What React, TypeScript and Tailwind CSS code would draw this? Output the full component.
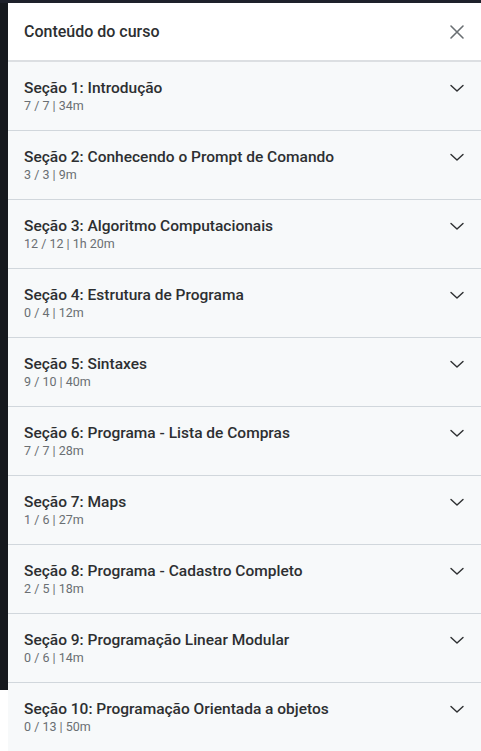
import React from 'react';

const SECTIONS = [
  { title: 'Seção 1: Introdução', meta: '7 / 7 | 34m' },
  { title: 'Seção 2: Conhecendo o Prompt de Comando', meta: '3 / 3 | 9m' },
  { title: 'Seção 3: Algoritmo Computacionais', meta: '12 / 12 | 1h 20m' },
  { title: 'Seção 4: Estrutura de Programa', meta: '0 / 4 | 12m' },
  { title: 'Seção 5: Sintaxes', meta: '9 / 10 | 40m' },
  { title: 'Seção 6: Programa - Lista de Compras', meta: '7 / 7 | 28m' },
  { title: 'Seção 7: Maps', meta: '1 / 6 | 27m' },
  { title: 'Seção 8: Programa - Cadastro Completo', meta: '2 / 5 | 18m' },
  { title: 'Seção 9: Programação Linear Modular', meta: '0 / 6 | 14m' },
  { title: 'Seção 10: Programação Orientada a objetos', meta: '0 / 13 | 50m' },
];

const Chevron = () => (
  <svg width="16" height="16" viewBox="0 0 16 16" fill="none" className="text-[#2d2f31]">
    <path d="M2 5.5 8 11l6-5.5" stroke="currentColor" strokeWidth="1.4" strokeLinecap="round" strokeLinejoin="round" />
  </svg>
);

const Close = () => (
  <svg width="16" height="16" viewBox="0 0 16 16" fill="none" className="text-[#6a6f73]">
    <path d="M2 2l12 12M14 2 2 14" stroke="currentColor" strokeWidth="1.6" strokeLinecap="round" />
  </svg>
);

export default function App() {
  return (
    <div className="min-h-screen bg-white font-['Roboto',sans-serif]">
      <div className="h-[3px] bg-[#1e212b]" />
      <div className="flex">
        {/* page behind the drawer */}
        <div className="w-2 shrink-0">
          <div className="h-[687px] bg-[#16191e]" />
        </div>

        <div className="flex-1 bg-[#f7f9fa]">
          {/* Header */}
          <div className="flex h-[59px] items-center justify-between bg-white px-4 border-b-2 border-[#dcdfe2]">
            <h2 className="text-base font-medium text-[#2d2f31]">Conteúdo do curso</h2>
            <Close />
          </div>

          {SECTIONS.map((s) => (
            <div key={s.title} className="flex items-start justify-between border-b border-[#d1d7dc] px-4 py-4">
              <div>
                <div className="text-[15.5px] leading-5 font-medium text-[#2d2f31]">{s.title}</div>
                <div className="text-[12.5px] leading-4 text-[#6a6f73]">{s.meta}</div>
              </div>
              <div className="pt-0.5">
                <Chevron />
              </div>
            </div>
          ))}
        </div>
      </div>
    </div>
  );
}
